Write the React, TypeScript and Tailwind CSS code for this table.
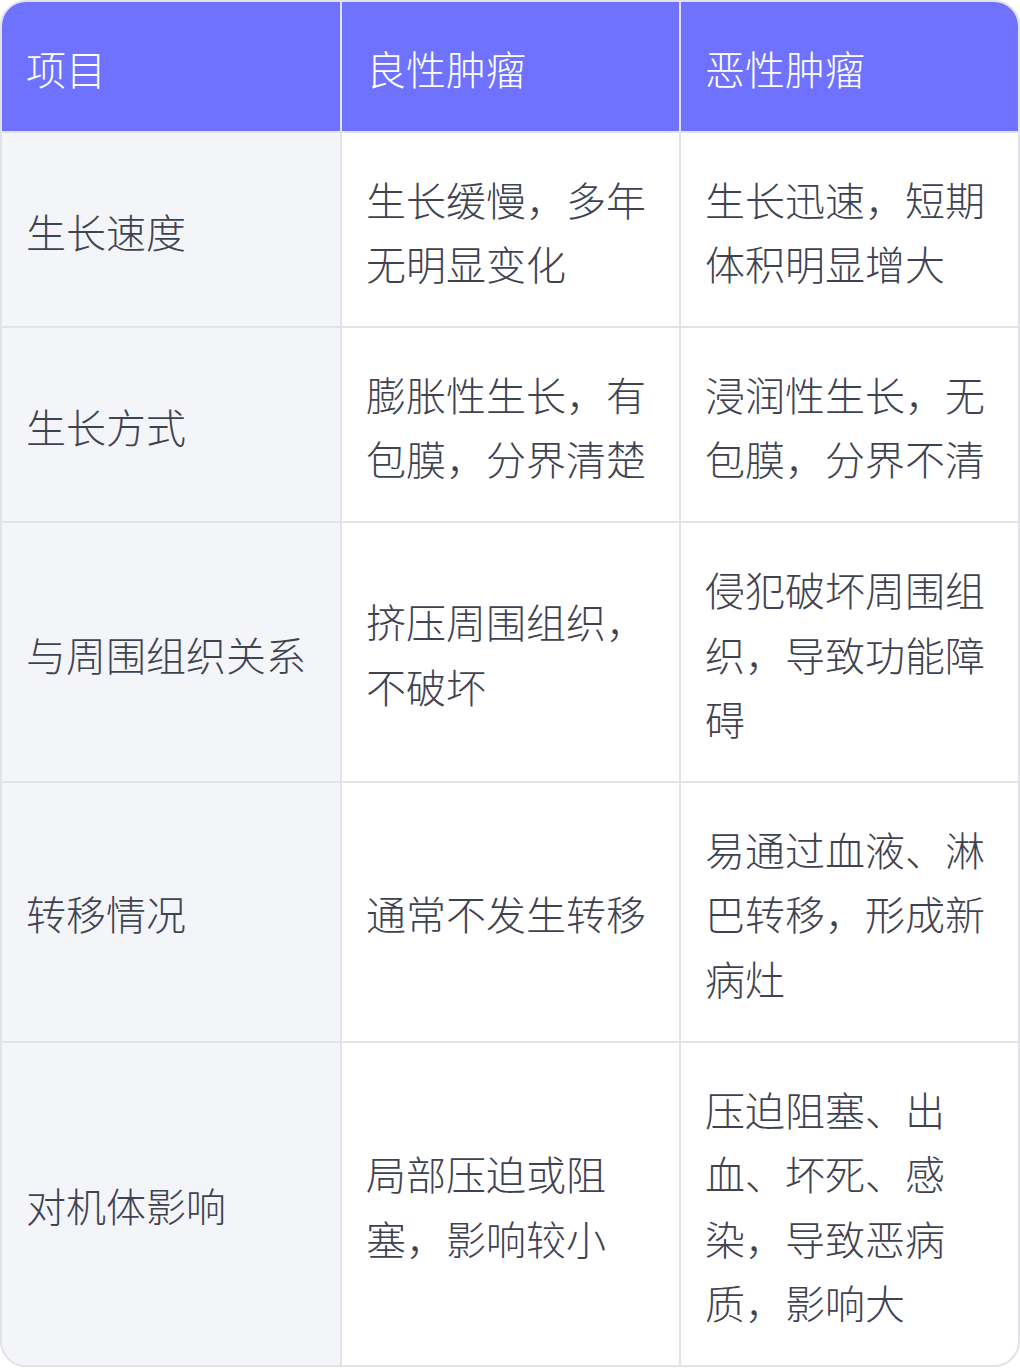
const rows: [string, string, string][] = [
  ["生长速度", "生长缓慢，多年无明显变化", "生长迅速，短期体积明显增大"],
  ["生长方式", "膨胀性生长，有包膜，分界清楚", "浸润性生长，无包膜，分界不清"],
  ["与周围组织关系", "挤压周围组织，不破坏", "侵犯破坏周围组织，导致功能障碍"],
  ["转移情况", "通常不发生转移", "易通过血液、淋巴转移，形成新病灶"],
  ["对机体影响", "局部压迫或阻塞，影响较小", "压迫阻塞、出血、坏死、感染，导致恶病质，影响大"],
];

export default function App() {
  return (
    <div className="w-[1020px] bg-white font-['Noto_Sans_CJK_SC',sans-serif]">
      <div className="overflow-hidden rounded-[26px] border-2 border-[#e2e3e8]">
        <table className="w-full table-fixed border-separate border-spacing-0 text-[40px] font-light leading-[64.6px]">
          <colgroup>
            <col className="w-[340px]" />
            <col className="w-[339px]" />
            <col />
          </colgroup>
          <thead>
            <tr className="bg-[#6e72ff] text-white">
              <th className="border-b-2 border-r-2 border-[#e2e3e8] px-[24px] pt-[34px] pb-[30px] text-left font-light">项目</th>
              <th className="border-b-2 border-r-2 border-[#e2e3e8] px-[24px] pt-[34px] pb-[30px] text-left font-light">良性肿瘤</th>
              <th className="border-b-2 border-[#e2e3e8] px-[24px] pt-[34px] pb-[30px] text-left font-light">恶性肿瘤</th>
            </tr>
          </thead>
          <tbody className="text-[#3f4351]">
            {rows.map((r, i) => (
              <tr key={r[0]}>
                <td className={`border-r-2 border-[#e2e3e8] bg-[#f4f5f9] px-[24px] pt-[34px] pb-[30px] align-middle ${i < rows.length - 1 ? "border-b-2" : ""}`}>
                  {r[0]}
                </td>
                <td className={`border-r-2 border-[#e2e3e8] px-[24px] pt-[34px] pb-[30px] align-middle ${i < rows.length - 1 ? "border-b-2" : ""}`}>
                  {r[1]}
                </td>
                <td className={`border-[#e2e3e8] px-[24px] pt-[34px] pb-[30px] align-middle ${i < rows.length - 1 ? "border-b-2" : ""}`}>
                  {r[2]}
                </td>
              </tr>
            ))}
          </tbody>
        </table>
      </div>
    </div>
  );
}
